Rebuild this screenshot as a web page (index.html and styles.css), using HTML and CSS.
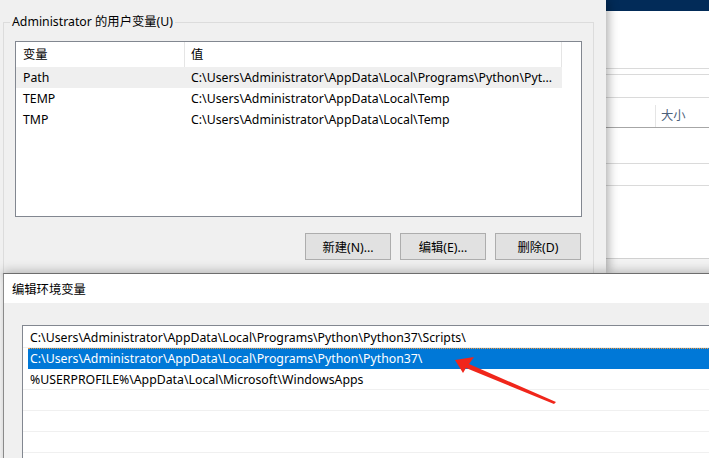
FILE: index.html
```html
<!DOCTYPE html>
<html lang="zh-CN">
<head>
<meta charset="utf-8">
<title>编辑环境变量</title>
<link rel="stylesheet" href="styles.css">
</head>
<body>
<div class="desk">
  <div class="explorer">
    <div class="ex-title"></div>
    <div class="ex-line l1"></div>
    <div class="ex-line l2"></div>
    <div class="ex-line l3"></div>
    <div class="ex-head"><span class="ex-col">大小</span></div>
    <div class="ex-row"></div>
    <div class="ex-row"></div>
    <div class="ex-fill"></div>
  </div>

  <div class="envdlg">
    <div class="group">
      <span class="group-title">Administrator 的用户变量(U)</span>
      <div class="listview">
        <div class="lv-head">
          <div class="c1">变量</div>
          <div class="c2">值</div>
        </div>
        <div class="lv-row hot"><div class="c1">Path</div><div class="c2">C:\Users\Administrator\AppData\Local\Programs\Python\Pyt...</div></div>
        <div class="lv-row"><div class="c1">TEMP</div><div class="c2">C:\Users\Administrator\AppData\Local\Temp</div></div>
        <div class="lv-row"><div class="c1">TMP</div><div class="c2">C:\Users\Administrator\AppData\Local\Temp</div></div>
      </div>
      <div class="btns">
        <button class="btn">新建(N)...</button>
        <button class="btn">编辑(E)...</button>
        <button class="btn">删除(D)</button>
      </div>
    </div>
  </div>

  <div class="editdlg">
    <div class="ed-title">编辑环境变量</div>
    <div class="ed-body">
      <div class="listbox">
        <div class="lb-row">C:\Users\Administrator\AppData\Local\Programs\Python\Python37\Scripts\</div>
        <div class="lb-row sel">C:\Users\Administrator\AppData\Local\Programs\Python\Python37\</div>
        <div class="lb-row">%USERPROFILE%\AppData\Local\Microsoft\WindowsApps</div>
        <div class="lb-row"></div>
        <div class="lb-row"></div>
        <div class="lb-row"></div>
        <div class="lb-row"></div>
      </div>
    </div>
  </div>

  <svg class="arrow" width="709" height="458" viewBox="0 0 709 458">
    <polygon points="455,360 474,357 469,364 556,402 554,404 466,368 463,373" fill="#f0261b"/>
  </svg>
</div>
</body>
</html>
```
FILE: styles.css
```css
* { box-sizing: border-box; }
html, body { margin: 0; padding: 0; }
body {
  font-family: "Noto Sans", "Noto Sans CJK SC", sans-serif;
  font-size: 12.3px;
  color: #000;
  background: #fff;
}
.desk {
  position: relative;
  width: 709px;
  height: 458px;
  overflow: hidden;
  background: #fff;
}

/* explorer window behind */
.explorer {
  position: absolute;
  left: 606px;
  top: 0;
  width: 103px;
  height: 273px;
  background: #fff;
  display: flex;
  flex-direction: column;
}
.ex-title { height: 11px; background: #022b58; }
.ex-line { border-bottom: 1px solid #dadada; }
.ex-line.l1 { margin-top: 57px; }
.ex-line.l2 { margin-top: 5px; }
.ex-line.l3 { margin-top: 22px; }
.ex-head {
  height: 30px;
  border-bottom: 1px solid #a6a6a6;
  display: flex;
  align-items: flex-end;
  padding-left: 49px;
}
.ex-col {
  border-left: 1px solid #e5e5e5;
  height: 22px;
  line-height: 22px;
  padding-left: 5px;
  color: #4c607a;
}
.ex-row { height: 0; border-bottom: 1px solid #dadada; }
.explorer .ex-row { margin-top: 35px; }
.explorer .ex-row + .ex-row { margin-top: 21px; }
.ex-fill {
  margin-top: 72px;
  flex: 1;
  border-top: 1px solid #d0d0d0;
  background: #f3f3f3;
}

/* environment variables dialog */
.envdlg {
  position: absolute;
  left: 0;
  top: 0;
  width: 606px;
  height: 273px;
  background: #f0f0f0;
  padding: 22px 0 0 3px;
  box-shadow: 2px 0 10px rgba(0,0,0,0.35);
  overflow: hidden;
  z-index: 2;
}
.group {
  position: relative;
  width: 591px;
  height: 300px;
  border: 1px solid #dcdcdc;
  padding: 18px 0 0 11px;
}
.group-title {
  position: absolute;
  top: -9px;
  left: 6px;
  padding: 0 2px;
  background: #f0f0f0;
  line-height: 16px;
}
.listview {
  width: 567px;
  height: 176px;
  border: 1px solid #828790;
  background: #fff;
}
.lv-head {
  display: flex;
  height: 25px;
  line-height: 25px;
}
.lv-head .c1, .lv-head .c2 { border-right: 1px solid #e5e5e5; }
.c1 { width: 169px; padding-left: 7px; white-space: nowrap; }
.c2 { width: 377px; padding-left: 6px; white-space: nowrap; overflow: hidden; }
.lv-row {
  display: flex;
  height: 21px;
  line-height: 21px;
  width: 546px;
}
.lv-row.hot { background: #efefef; }

.btns {
  display: flex;
  justify-content: flex-end;
  gap: 9px;
  margin-top: 16px;
  width: 567px;
  padding-right: 1px;
}
.btn {
  width: 86px;
  height: 27px;
  background: #e1e1e1;
  border: 1px solid #adadad;
  font-family: inherit;
  font-size: 12.3px;
  color: #000;
  padding: 0;
}

/* edit dialog (front) */
.editdlg {
  position: absolute;
  left: 3px;
  top: 273px;
  width: 720px;
  height: 200px;
  background: #f0f0f0;
  border-top: 1px solid #6d6d6d;
  border-left: 1px solid #8a8a8a;
  box-shadow: 0 -2px 10px rgba(0,0,0,0.25);
  z-index: 3;
}
.ed-title {
  height: 29px;
  line-height: 31px;
  background: #fff;
  padding-left: 8px;
}
.ed-body { padding: 22px 0 0 18px; }
.listbox {
  border: 1px solid #828790;
  background: #fff;
  height: 200px;
  padding-top: 1px;
}
.lb-row {
  height: 21px;
  line-height: 21px;
  border-bottom: 1px solid #f0f0f0;
  padding-left: 7px;
  white-space: nowrap;
}
.lb-row.sel {
  margin-left: 5px;
  padding-left: 2px;
  background: #0078d7;
  color: #fff;
  border-top: 1px dotted #f39a3c;
  border-bottom: 1px solid #0078d7;
  line-height: 19px;
}

.arrow {
  position: absolute;
  left: 0;
  top: 0;
  z-index: 5;
}
```
